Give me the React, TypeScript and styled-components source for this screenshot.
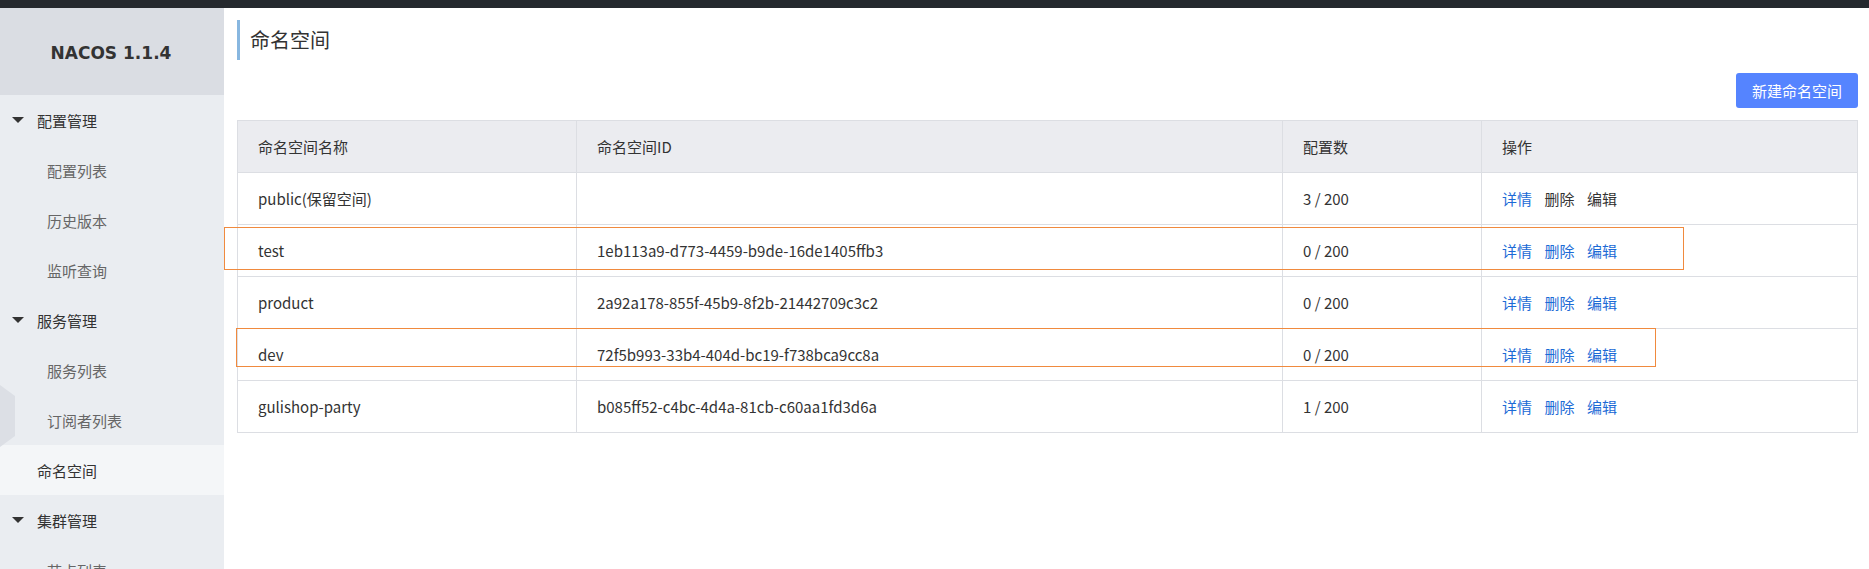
import React from "react";
import styled, { createGlobalStyle } from "styled-components";

const Global = createGlobalStyle`
  html, body { margin: 0; padding: 0; background: #fff; }
  body { font-family: "Noto Sans CJK SC", "Liberation Sans", sans-serif; color: #333; }
  * { box-sizing: border-box; }
`;

const Page = styled.div`
  position: relative;
  width: 1869px;
  height: 569px;
  overflow: hidden;
  display: flex;
  flex-direction: column;
`;

const TopBar = styled.div`
  height: 8px;
  background: #25292e;
  flex: none;
`;

const Body = styled.div`
  flex: 1;
  display: flex;
  min-height: 0;
`;

const Sidebar = styled.aside`
  position: relative;
  width: 224px;
  flex: none;
  background: #eaedf1;
  display: flex;
  flex-direction: column;
  overflow: hidden;
`;

const Brand = styled.div`
  height: 87px;
  flex: none;
  background: #dadde3;
  display: flex;
  align-items: center;
  justify-content: center;
  font-family: "DejaVu Sans", "Liberation Sans", sans-serif;
  font-weight: bold;
  font-size: 17px;
  color: #333;
  padding-right: 2px;
  padding-top: 2px;
`;

const MenuItem = styled.div<{ $level: 0 | 1; $active?: boolean }>`
  height: 50px;
  flex: none;
  display: flex;
  align-items: center;
  font-size: 15px;
  padding-left: ${(p) => (p.$level === 1 ? "47px" : "12px")};
  color: ${(p) => (p.$level === 1 ? "#666" : "#333")};
  background: ${(p) => (p.$active ? "#f4f6f8" : "transparent")};
`;

const Caret = styled.span`
  width: 0;
  height: 0;
  border-left: 6px solid transparent;
  border-right: 6px solid transparent;
  border-top: 6px solid #333;
  margin-right: 13px;
`;

const Spacer = styled.span`
  width: 25px;
  flex: none;
`;

const SideHandle = styled.svg`
  position: absolute;
  left: 0;
  top: 377px;
`;

const Main = styled.main`
  flex: 1;
  padding: 12px 12px 0 13px;
  display: flex;
  flex-direction: column;
`;

const Title = styled.h1`
  margin: 0;
  height: 40px;
  border-left: 3px solid #88b7e0;
  padding-left: 10px;
  font-size: 20px;
  font-weight: normal;
  line-height: 40px;
  color: #333;
`;

const Toolbar = styled.div`
  display: flex;
  justify-content: flex-end;
  margin-top: 13px;
  margin-bottom: 12px;
`;

const PrimaryButton = styled.button`
  height: 35px;
  padding: 0 16px;
  border: none;
  border-radius: 3px;
  background: #5584ff;
  color: #fff;
  font-family: inherit;
  font-size: 15px;
  cursor: pointer;
`;

const Table = styled.table`
  width: 1620px;
  border-collapse: collapse;
  table-layout: fixed;
  font-size: 15px;
  color: #333;
`;

const Th = styled.th`
  height: 52px;
  padding: 0 20px;
  text-align: left;
  font-weight: normal;
  background: #ebecf0;
  border: 1px solid #dcdee3;
`;

const Td = styled.td`
  height: 52px;
  padding: 0 20px;
  border: 1px solid #dcdee3;
  white-space: nowrap;
`;

const Action = styled.a<{ $muted?: boolean }>`
  color: ${(p) => (p.$muted ? "#333" : "#1c6bd6")};
  text-decoration: none;
  margin-right: 12.5px;
  cursor: pointer;
`;

const Highlight = styled.div`
  position: absolute;
  border: 1.5px solid #f08a3e;
  pointer-events: none;
`;

const rows = [
  { name: "public(保留空间)", id: "", count: "3 / 200", reserved: true },
  { name: "test", id: "1eb113a9-d773-4459-b9de-16de1405ffb3", count: "0 / 200" },
  { name: "product", id: "2a92a178-855f-45b9-8f2b-21442709c3c2", count: "0 / 200" },
  { name: "dev", id: "72f5b993-33b4-404d-bc19-f738bca9cc8a", count: "0 / 200" },
  { name: "gulishop-party", id: "b085ff52-c4bc-4d4a-81cb-c60aa1fd3d6a", count: "1 / 200" },
];

const menu: { label: string; level: 0 | 1; group?: boolean; active?: boolean }[] = [
  { label: "配置管理", level: 0, group: true },
  { label: "配置列表", level: 1 },
  { label: "历史版本", level: 1 },
  { label: "监听查询", level: 1 },
  { label: "服务管理", level: 0, group: true },
  { label: "服务列表", level: 1 },
  { label: "订阅者列表", level: 1 },
  { label: "命名空间", level: 0, active: true },
  { label: "集群管理", level: 0, group: true },
  { label: "节点列表", level: 1 },
];

export default function App() {
  return (
    <>
      <Global />
      <Page>
        <TopBar />
        <Body>
          <Sidebar>
            <Brand>NACOS 1.1.4</Brand>
            {menu.map((m) => (
              <MenuItem key={m.label} $level={m.level} $active={m.active}>
                {m.level === 0 && (m.group ? <Caret /> : <Spacer />)}
                {m.label}
              </MenuItem>
            ))}
            <SideHandle width="16" height="64" viewBox="0 0 16 64">
              <polygon points="0,0 15,11 15,51 0,62" fill="#dcdfe5" />
            </SideHandle>
          </Sidebar>
          <Main>
            <Title>命名空间</Title>
            <Toolbar>
              <PrimaryButton>新建命名空间</PrimaryButton>
            </Toolbar>
            <Table>
              <colgroup>
                <col style={{ width: 339 }} />
                <col style={{ width: 706 }} />
                <col style={{ width: 199 }} />
                <col style={{ width: 376 }} />
              </colgroup>
              <thead>
                <tr>
                  <Th>命名空间名称</Th>
                  <Th>命名空间ID</Th>
                  <Th>配置数</Th>
                  <Th>操作</Th>
                </tr>
              </thead>
              <tbody>
                {rows.map((r) => (
                  <tr key={r.name}>
                    <Td>{r.name}</Td>
                    <Td>{r.id}</Td>
                    <Td>{r.count}</Td>
                    <Td>
                      <Action>详情</Action>
                      <Action $muted={r.reserved}>删除</Action>
                      <Action $muted={r.reserved}>编辑</Action>
                    </Td>
                  </tr>
                ))}
              </tbody>
            </Table>
          </Main>
        </Body>
        <Highlight style={{ left: 224, top: 227, width: 1460, height: 43 }} />
        <Highlight style={{ left: 236, top: 328, width: 1420, height: 39 }} />
      </Page>
    </>
  );
}
